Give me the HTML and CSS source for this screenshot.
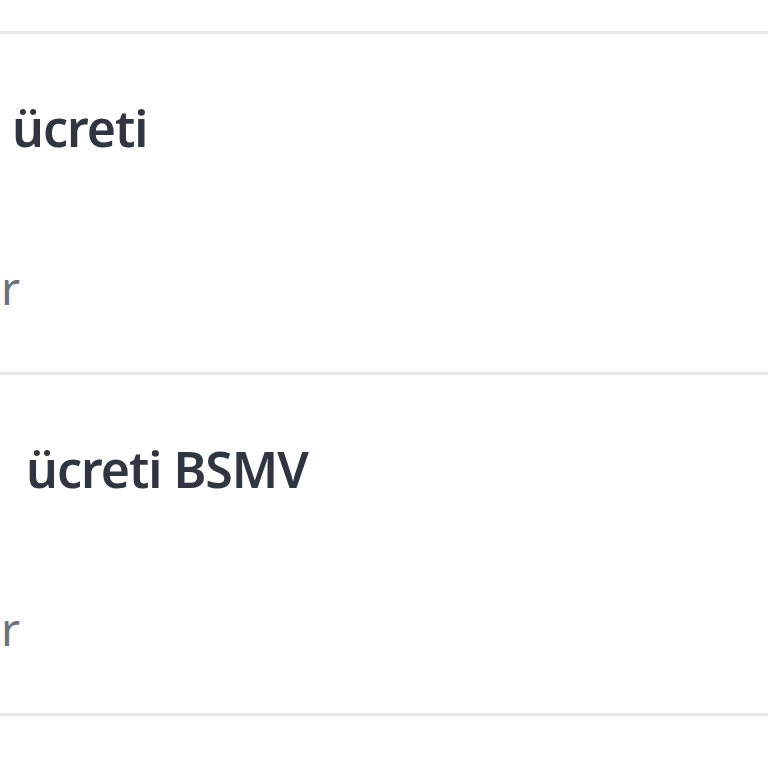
FILE: index.html
```html
<!DOCTYPE html>
<html lang="tr">
<head>
<meta charset="utf-8">
<link rel="stylesheet" href="styles.css">
</head>
<body>
<div class="list">
  <div class="item item-first">
    <div class="title">ücreti</div>
    <div class="sub">r</div>
  </div>
  <div class="item item-second">
    <div class="title">ücreti BSMV</div>
    <div class="sub">r</div>
  </div>
  <div class="item item-last"></div>
</div>
</body>
</html>
```
FILE: styles.css
```css
html, body {
  margin: 0;
  padding: 0;
  background: #ffffff;
}
body {
  font-family: "Noto Sans", "Open Sans", sans-serif;
  width: 768px;
  height: 768px;
  overflow: hidden;
}
.list {
  padding-top: 31px;
}
.item {
  border-top: 3px solid #e5e7eb;
  height: 338px;
  display: flex;
  flex-direction: column;
}
.item-last {
  height: 52px;
}
.title {
  font-size: 50px;
  font-weight: 600;
  letter-spacing: -1px;
  color: #2f3541;
  line-height: 60px;
  margin-top: 64px;
}
.sub {
  font-size: 46px;
  color: #6b7280;
  line-height: 56px;
  margin-top: 101px;
  padding-left: 1px;
}
.item-first .title { padding-left: 12px; }
.item-second .title { padding-left: 26px; }
```
